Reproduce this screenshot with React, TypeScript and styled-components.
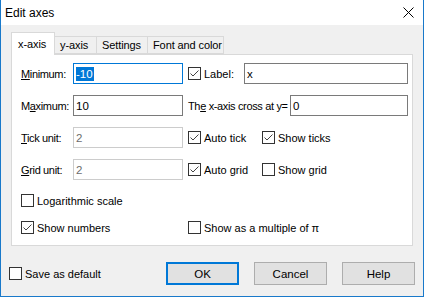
import styled, { createGlobalStyle } from "styled-components";

const GlobalStyle = createGlobalStyle`
  body {
    margin: 0;
    font-family: "Liberation Sans", Arial, sans-serif;
    font-size: 11px;
    color: #000;
  }
`;

const Window = styled.div`
  width: 424px;
  height: 297px;
  box-sizing: border-box;
  border: 1px solid #1979ca;
  border-top: none;
  display: flex;
  flex-direction: column;
  background: #f0f0f0;
`;

const TitleBar = styled.div`
  height: 25px;
  flex-shrink: 0;
  background: #fff;
  display: flex;
  align-items: center;
  justify-content: space-between;
  padding: 0 9px 0 4px;
  font-size: 12px;
`;

const Body = styled.div`
  flex: 1;
  display: flex;
  flex-direction: column;
  padding: 7px 10px 0 10px;
`;

const TabStrip = styled.div`
  display: flex;
  align-items: flex-end;
  height: 22px;
`;

const Tab = styled.div<{ $active?: boolean; $width: number }>`
  box-sizing: border-box;
  width: ${(p) => p.$width}px;
  height: ${(p) => (p.$active ? 23 : 18)}px;
  margin-bottom: ${(p) => (p.$active ? -1 : 0)}px;
  position: relative;
  z-index: ${(p) => (p.$active ? 2 : 1)};
  display: flex;
  align-items: center;
  white-space: nowrap;
  letter-spacing: -0.1px;
  padding: 0 0 ${(p) => (p.$active ? 1 : 0)}px ${(p) => (p.$active ? 6 : 5)}px;
  background: ${(p) => (p.$active ? "#fff" : "#f0f0f0")};
  border: 1px solid #d9d9d9;
  border-bottom: ${(p) => (p.$active ? "none" : "1px solid #d9d9d9")};
  border-left: ${(p) => (p.$active ? "1px solid #d9d9d9" : "none")};
`;

const Panel = styled.div`
  height: 192px;
  box-sizing: border-box;
  background: #fff;
  border: 1px solid #d9d9d9;
  padding: 8px 4px 0 9px;
  display: flex;
  flex-direction: column;
`;

const FormRow = styled.div<{ $gap?: number }>`
  display: flex;
  align-items: center;
  height: 21px;
  margin-top: ${(p) => p.$gap ?? 11}px;
  &:first-child {
    margin-top: 0;
  }
`;

const FieldLabel = styled.span<{ $width: number }>`
  width: ${(p) => p.$width}px;
  flex-shrink: 0;
  white-space: nowrap;
  letter-spacing: -0.35px;
`;

const Mn = styled.span`
  text-decoration: underline;
  text-underline-offset: 1px;
`;

type FieldState = "focus" | "normal" | "disabled";

const Field = styled.div<{ $width?: number; $state?: FieldState }>`
  box-sizing: border-box;
  height: 21px;
  ${(p) => (p.$width ? `width: ${p.$width}px; flex-shrink: 0;` : "flex: 1;")}
  background: #fff;
  border: 1px solid
    ${(p) =>
      p.$state === "focus" ? "#0078d7" : p.$state === "disabled" ? "#cccccc" : "#7a7a7a"};
  color: ${(p) => (p.$state === "disabled" ? "#6d6d6d" : "#000")};
  display: flex;
  align-items: center;
  padding-left: 2px;
  font-size: 11.5px;
`;

const Selection = styled.span`
  background: #0078d7;
  color: #fff;
  line-height: 14px;
  padding-right: 1px;
`;

const Column = styled.div`
  margin-left: 5px;
  display: flex;
  align-items: center;
  flex: 1;
`;

const CheckItem = styled.label<{ $width?: number }>`
  display: flex;
  align-items: center;
  white-space: nowrap;
  ${(p) => (p.$width ? `width: ${p.$width}px; flex-shrink: 0;` : "")}
`;

const Box = styled.span`
  box-sizing: border-box;
  width: 13px;
  height: 13px;
  border: 1px solid #333;
  background: #fff;
  margin-right: 3px;
  display: flex;
  align-items: center;
  justify-content: center;
`;

const Footer = styled.div`
  display: flex;
  align-items: center;
  height: 23px;
  margin: 16px -2px 0 -2px;
`;

const Spacer = styled.div`
  flex: 1;
`;

const Button = styled.div<{ $default?: boolean }>`
  box-sizing: border-box;
  width: 73px;
  height: 23px;
  margin-left: 15px;
  background: #e1e1e1;
  border: ${(p) => (p.$default ? "2px solid #0078d7" : "1px solid #adadad")};
  display: flex;
  align-items: center;
  justify-content: center;
  font-size: 11.5px;
`;

function Check({ checked, label, width }: { checked?: boolean; label: React.ReactNode; width?: number }) {
  return (
    <CheckItem $width={width}>
      <Box>
        {checked && (
          <svg width="11" height="11" viewBox="0 0 11 11">
            <polyline points="1.5,5.5 4,8 9.5,2.5" fill="none" stroke="#444" strokeWidth="1" />
          </svg>
        )}
      </Box>
      {label}
    </CheckItem>
  );
}

function App() {
  return (
    <>
      <GlobalStyle />
      <Window>
        <TitleBar>
          <span>Edit axes</span>
          <svg width="11" height="11" viewBox="0 0 11 11">
            <path d="M0.5 0.5 L10.5 10.5 M10.5 0.5 L0.5 10.5" stroke="#000" strokeWidth="1" />
          </svg>
        </TitleBar>
        <Body>
          <TabStrip>
            <Tab $active $width={44}>x-axis</Tab>
            <Tab $width={42}>y-axis</Tab>
            <Tab $width={51}>Settings</Tab>
            <Tab $width={76}>Font and color</Tab>
          </TabStrip>
          <Panel>
            <FormRow>
              <FieldLabel $width={52}>
                <Mn>M</Mn>inimum:
              </FieldLabel>
              <Field $width={110} $state="focus">
                <Selection>-10</Selection>
              </Field>
              <Column>
                <Check checked width={56} label="Label:" />
                <Field>x</Field>
              </Column>
            </FormRow>
            <FormRow>
              <FieldLabel $width={52}>
                M<Mn>a</Mn>ximum:
              </FieldLabel>
              <Field $width={110}>10</Field>
              <Column>
                <FieldLabel $width={102}>
                  Th<Mn>e</Mn> x-axis cross at y=
                </FieldLabel>
                <Field>0</Field>
              </Column>
            </FormRow>
            <FormRow>
              <FieldLabel $width={52}>
                <Mn>T</Mn>ick unit:
              </FieldLabel>
              <Field $width={110} $state="disabled">2</Field>
              <Column>
                <Check checked width={74} label="Auto tick" />
                <Check checked label="Show ticks" />
              </Column>
            </FormRow>
            <FormRow>
              <FieldLabel $width={52}>
                <Mn>G</Mn>rid unit:
              </FieldLabel>
              <Field $width={110} $state="disabled">2</Field>
              <Column>
                <Check checked width={74} label="Auto grid" />
                <Check label="Show grid" />
              </Column>
            </FormRow>
            <FormRow $gap={10}>
              <Check label="Logarithmic scale" />
            </FormRow>
            <FormRow $gap={6}>
              <Check checked width={167} label="Show numbers" />
              <Check label="Show as a multiple of π" />
            </FormRow>
          </Panel>
          <Footer>
            <Check label="Save as default" />
            <Spacer />
            <Button $default>OK</Button>
            <Button>Cancel</Button>
            <Button>Help</Button>
          </Footer>
        </Body>
      </Window>
    </>
  );
}

export default App;
